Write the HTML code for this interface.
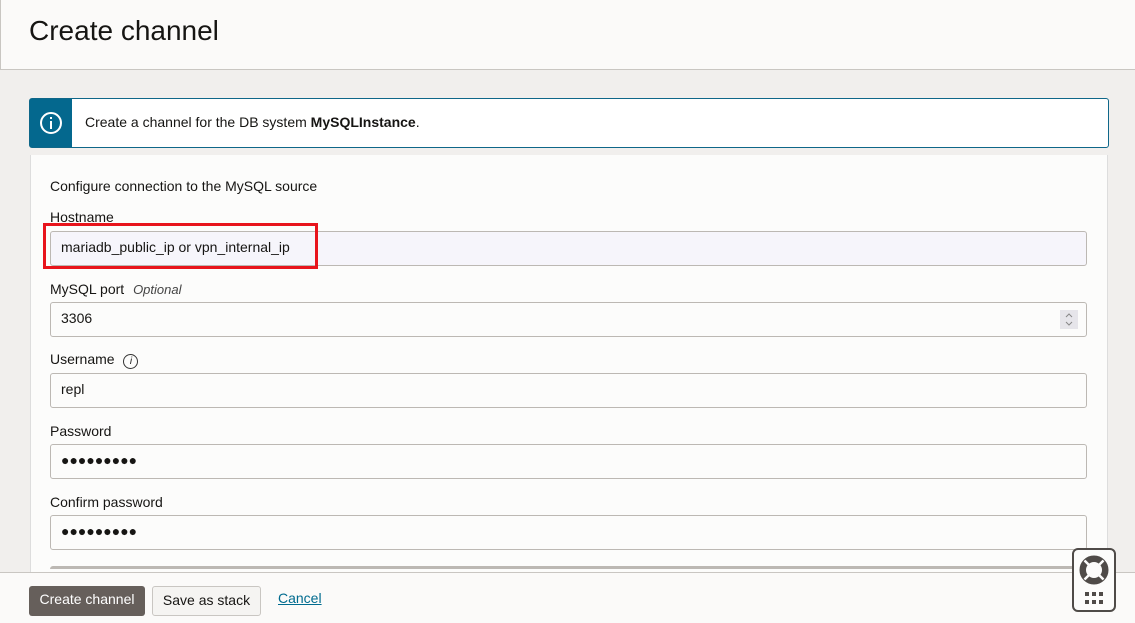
<!DOCTYPE html>
<html><head><style>
*{box-sizing:border-box;margin:0;padding:0}
body{width:1135px;height:623px;overflow:hidden;background:#f1efed;font-family:"Liberation Sans",sans-serif;color:#161513;position:relative}
.hdr{position:absolute;left:0;top:0;width:1135px;height:70px;background:#fbfaf9;border-bottom:1px solid #c9c6c2;border-left:1px solid #c9c6c2}
.hdr h1{position:absolute;left:28px;top:15px;font-size:28px;font-weight:400}
.info{position:absolute;left:29px;top:98px;width:1080px;height:50px;border:1px solid #0f6789;background:#fff;border-radius:3px}
.info .s{position:absolute;left:0;top:0;width:42px;height:48px;background:#04688e}
.info .t{position:absolute;left:55px;top:15px;font-size:14px}
.panel{position:absolute;left:30px;top:155px;width:1078px;height:420px;background:#fcfcfb;border-left:1px solid #ddd;border-right:1px solid #ddd}
.lbl{position:absolute;left:50px;font-size:14px;white-space:nowrap}
.inp{position:absolute;left:50px;width:1037px;height:35px;border:1px solid #bcb8b3;border-radius:3px;background:#fcfcfb;font-size:14px;padding:7px 10px}
.dots{font-size:14px;padding-top:7px}
.foot{position:absolute;left:0;top:572px;width:1135px;height:51px;background:#fbfaf9;border-top:1px solid #c9c6c2}
.btn{position:absolute;top:13px;height:30px;border-radius:3px;font-size:14px;padding:5px 0;text-align:center;white-space:nowrap}
</style></head><body>
<div class="hdr"><h1>Create channel</h1></div>
<div class="panel"></div>
<div class="info"><div class="s"><svg width="42" height="48"><circle cx="21" cy="24" r="10" fill="none" stroke="#fff" stroke-width="2"/><rect x="20" y="22" width="2" height="8" fill="#fff"/><rect x="20" y="18" width="2" height="2" fill="#fff"/></svg></div><div class="t">Create a channel for the DB system <b>MySQLInstance</b>.</div></div>
<div class="lbl" style="top:178px">Configure connection to the MySQL source</div>
<div class="lbl" style="top:209px">Hostname</div>
<div class="inp" style="top:231px;background:#f6f5fb">mariadb_public_ip or vpn_internal_ip</div>
<div style="position:absolute;left:43px;top:223px;width:275px;height:46px;border:3px solid #e8141c"></div>
<div class="lbl" style="top:281px">MySQL port <i style="font-size:13px;color:#444;margin-left:5px">Optional</i></div>
<div class="inp" style="top:302px">3306<div style="position:absolute;right:8px;top:7px;width:18px;height:19px;background:#e6e5ea"><svg width="18" height="19"><path d="M6 7l3-3 3 3M6 12l3 3 3-3" fill="none" stroke="#888" stroke-width="1"/></svg></div></div>
<div class="lbl" style="top:351px">Username <span style="display:inline-block;width:15px;height:15px;border:1px solid #333;border-radius:50%;font-size:10px;text-align:center;line-height:13px;margin-left:5px;font-style:italic">i</span></div>
<div class="inp" style="top:373px">repl</div>
<div class="lbl" style="top:423px">Password</div>
<div class="inp dots" style="top:444px">●●●●●●●●●</div>
<div class="lbl" style="top:494px">Confirm password</div>
<div class="inp dots" style="top:515px">●●●●●●●●●</div>
<div style="position:absolute;left:50px;top:566px;width:1037px;height:6px;border-top:3px solid #bcb8b3;border-radius:3px 3px 0 0"></div>
<div class="foot">
<div class="btn" style="left:29px;width:116px;background:#665f5b;color:#fff">Create channel</div>
<div class="btn" style="left:152px;width:109px;background:#f5f4f2;border:1px solid #c9c6c2">Save as stack</div>
<div style="position:absolute;left:278px;top:17px;font-size:14px;color:#006b8f;text-decoration:underline">Cancel</div>
</div>
<div style="position:absolute;left:1072px;top:548px;width:44px;height:64px;border:2px solid #4f4b48;border-radius:6px;background:#fcfcfb">
<svg width="40" height="60"><circle cx="20" cy="20" r="11" fill="none" stroke="#4f4b48" stroke-width="6"/><g stroke="#fcfcfb" stroke-width="2.5"><line x1="10" y1="10" x2="15" y2="15"/><line x1="30" y1="10" x2="25" y2="15"/><line x1="10" y1="30" x2="15" y2="25"/><line x1="30" y1="30" x2="25" y2="25"/></g><circle cx="20" cy="20" r="14" fill="none" stroke="#4f4b48" stroke-width="1"/><g fill="#4f4b48"><rect x="11" y="42" width="4" height="4"/><rect x="18" y="42" width="4" height="4"/><rect x="25" y="42" width="4" height="4"/><rect x="11" y="50" width="4" height="4"/><rect x="18" y="50" width="4" height="4"/><rect x="25" y="50" width="4" height="4"/></g></svg></div>
</body></html>
